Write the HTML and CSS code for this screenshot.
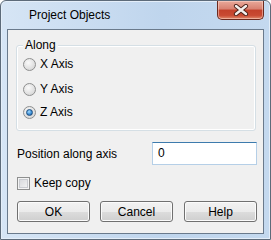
FILE: index.html
```html
<!DOCTYPE html>
<html>
<head>
    <title>Project Objects</title>
    <meta name="viewport" content="width=device-width, initial-scale=1.0">
    <link rel="stylesheet" href="styles.css">
</head>
<body>
    <div class="window">
        <div class="titlebar">
            <span class="title">Project Objects</span>
            <button class="close">
                <svg width="16" height="12" viewBox="0 0 16 12">
                    <path d="M3 2 L13 10 M13 2 L3 10" stroke="#4a2018" stroke-width="4.2" stroke-linecap="round"/>
                    <path d="M3 2 L13 10 M13 2 L3 10" stroke="#f4f0ee" stroke-width="2.4" stroke-linecap="round"/>
                </svg>
            </button>
        </div>
        <div class="client">
            <div class="group">
                <span class="group-title">Along</span>
                <label class="option row-x"><span class="radio"></span>X Axis</label>
                <label class="option row-y"><span class="radio"></span>Y Axis</label>
                <label class="option row-z"><span class="radio checked"></span>Z Axis</label>
            </div>
            <div class="field-row">
                <span>Position along axis</span>
                <div class="textbox">0</div>
            </div>
            <label class="check-row"><span class="checkbox"></span>Keep copy</label>
            <div class="buttons">
                <button class="btn">OK</button>
                <button class="btn">Cancel</button>
                <button class="btn help">Help</button>
            </div>
        </div>
    </div>
</body>
</html>
```

FILE: styles.css
```css
body {
    margin: 0;
    font-family: "Liberation Sans", Arial, sans-serif;
    font-size: 12px;
    color: #000;
    background: #fff;
}
.window {
    width: 271px;
    height: 240px;
    box-sizing: border-box;
    border: 1px solid #5d6b7a;
    border-radius: 6px 6px 0 0;
    padding: 0 6px 5px 6px;
    background: linear-gradient(to right, #d6e5f5, #bfd5ed 60%, #c4d9ef);
    box-shadow: inset 0 0 0 1px #e4eef9;
}
.titlebar {
    height: 28px;
    display: flex;
    justify-content: space-between;
    align-items: flex-start;
}
.title {
    padding-left: 22px;
    line-height: 29px;
    color: #000;
}
.close {
    width: 47px;
    height: 19px;
    margin: 0;
    padding: 0;
    border: 1px solid #6b2a1f;
    border-top: none;
    border-radius: 0 0 5px 5px;
    background: linear-gradient(to bottom, #e9a99a, #d88070 45%, #c3412b 50%, #c94a33 80%, #e08a6c);
    box-shadow: inset 0 0 0 1px rgba(255, 220, 210, 0.5);
    display: flex;
    align-items: center;
    justify-content: center;
}
.client {
    height: 205px;
    box-sizing: border-box;
    border: 1px solid #6a7a8c;
    background: #f0f0f0;
    overflow: hidden;
}
.group {
    position: relative;
    width: 240px;
    box-sizing: border-box;
    margin: 15px 0 0 8px;
    padding: 10px 0 10px 6px;
    border: 1px solid #d5dfe5;
    border-radius: 3px;
    box-shadow: inset 0 0 0 1px #fff;
}
.group-title {
    position: absolute;
    top: -8px;
    left: 6px;
    padding: 0 2px;
    line-height: 15px;
    background: #f0f0f0;
}
.option {
    display: flex;
    align-items: center;
    height: 16px;
    gap: 4px;
}
.row-y { margin-top: 9px; }
.row-z { margin-top: 7px; }
.radio {
    width: 13px;
    height: 13px;
    box-sizing: border-box;
    border-radius: 50%;
    border: 1px solid #8e8f8f;
    background: radial-gradient(circle at 40% 35%, #fafafa, #e2e2e2 55%, #cfcfcf);
    position: relative;
}
.radio.checked::after {
    content: "";
    position: absolute;
    left: 2px;
    top: 2px;
    width: 7px;
    height: 7px;
    box-sizing: border-box;
    border-radius: 50%;
    border: 1px solid #1e4f80;
    background: radial-gradient(circle at 40% 35%, #a6dcff, #3d8fd6 55%, #17508c);
}
.field-row {
    display: flex;
    justify-content: space-between;
    align-items: center;
    margin: 11px 6px 0 9px;
}
.textbox {
    width: 105px;
    height: 23px;
    box-sizing: border-box;
    padding-left: 5px;
    line-height: 20px;
    background: #fff;
    border: 1px solid #b5cfe7;
    border-top-color: #3d7bad;
}
.check-row {
    display: flex;
    align-items: center;
    gap: 4px;
    height: 16px;
    margin: 10px 0 0 9px;
}
.checkbox {
    width: 13px;
    height: 13px;
    box-sizing: border-box;
    border: 1px solid #8e8f8f;
    background: linear-gradient(to bottom right, #d2d4d8, #f7f7f7);
    box-shadow: inset 0 0 0 1px #f4f4f4, inset 0 0 0 2px #c9cbd0;
}
.buttons {
    display: flex;
    gap: 10px;
    margin: 10px 0 0 9px;
}
.btn {
    width: 73px;
    height: 21px;
    padding: 0;
    font-family: "Liberation Sans", Arial, sans-serif;
    font-size: 12px;
    color: #000;
    border: 1px solid #707070;
    border-radius: 3px;
    background: linear-gradient(to bottom, #f2f2f2, #ebebeb 50%, #dddddd 50%, #cfcfcf);
    box-shadow: inset 0 0 0 1px #fbfbfb;
}
.btn.help {
    margin-left: 1px;
}
```
